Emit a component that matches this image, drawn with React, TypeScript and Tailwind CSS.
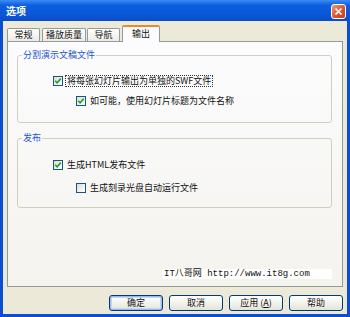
import React from 'react';

const CheckBox = ({ checked }: { checked: boolean }) => (
  <span className="w-[10px] h-[10px] shrink-0 border border-[#1C5180] bg-[linear-gradient(135deg,#DCDCD7,#FFFFFF)] flex items-center justify-center">
    {checked && (
      <svg width="8" height="8" viewBox="0 0 8 8">
        <path d="M1.2 3.8 L3.1 5.8 L6.8 1.6" stroke="#21A121" strokeWidth="1.6" fill="none" />
      </svg>
    )}
  </span>
);

const CheckRow = ({
  checked,
  label,
  indent,
  focused,
}: {
  checked: boolean;
  label: string;
  indent: string;
  focused?: boolean;
}) => (
  <div className={`flex items-center h-[12px] gap-[2px] ${indent}`}>
    <CheckBox checked={checked} />
    <span className={focused ? 'border border-dotted border-[#333] px-[1px] leading-[10px]' : 'px-[2px]'}>{label}</span>
  </div>
);

const Tab = ({ label, width, active }: { label: string; width: string; active?: boolean }) =>
  active ? (
    <div
      className={`${width} h-[17px] -mb-px relative z-10 bg-[#FCFCFE] border-x border-[#919B9C] border-t-2 border-t-[#E68B2C] rounded-t-[2px] flex justify-center pt-[1px] leading-[12px]`}
    >
      {label}
    </div>
  ) : (
    <div
      className={`${width} h-[13px] bg-[linear-gradient(#FFFFFF,#ECEBE6)] border-x border-t border-[#919B9C] rounded-t-[2px] flex items-center justify-center`}
    >
      {label}
    </div>
  );

const Button = ({ children, isDefault }: { children: React.ReactNode; isDefault?: boolean }) => (
  <button
    className={`w-[54px] h-[16px] rounded-[3px] border border-[#003C74] bg-[linear-gradient(#FFFFFF,#F0F0EA_60%,#E3E3DB)] flex items-center justify-center leading-[12px] ${
      isDefault ? 'shadow-[inset_0_0_0_1px_#9DB9EB,inset_0_0_0_2px_#C5D6F6]' : ''
    }`}
  >
    {children}
  </button>
);

export default function App() {
  return (
    <div className="w-[350px] h-[317px] flex flex-col bg-[#0B4FD1] overflow-hidden text-[9px] leading-[12px] text-[#111] font-['Noto_Sans_CJK_SC','Noto_Sans',sans-serif]">
      {/* title bar */}
      <div className="h-[21px] shrink-0 flex items-center pl-[6px] pr-[4px] bg-[linear-gradient(#3D8CF4,#0D5EE0_25%,#0A56D8_70%,#0A4CC6)]">
        <span className="text-white font-bold text-[10px]">选项</span>
        <div className="ml-auto mt-[2px] w-[15px] h-[15px] rounded-[3px] border border-white bg-[linear-gradient(135deg,#EE9A78,#D9562F_55%,#C2411E)] flex items-center justify-center">
          <svg width="9" height="9" viewBox="0 0 9 9">
            <path d="M1.5 1.5 L7.5 7.5 M7.5 1.5 L1.5 7.5" stroke="white" strokeWidth="1.7" />
          </svg>
        </div>
      </div>

      {/* body */}
      <div className="flex-1 mx-[3px] mb-[3px] bg-[#ECE9D8] flex flex-col px-[4px]">
        <div className="h-[20px] flex items-end gap-[1px]">
          <Tab label="常规" width="w-[33px]" />
          <Tab label="播放质量" width="w-[44px] ml-[1px]" />
          <Tab label="导航" width="w-[33px]" />
          <Tab label="输出" width="w-[38px] ml-[1px]" active />
        </div>

        <div className="h-[246px] border border-[#919B9C] bg-[linear-gradient(#FCFCFE,#F4F3EE)] flex flex-col pl-[9px] pr-[10px] pt-[7px] pb-[7px]">
          <fieldset className="border border-[#D0D0BF] rounded-[3px] pt-[14px] pb-[15px] flex flex-col gap-[8px]">
            <legend className="ml-[4px] px-[1px] text-[#1E56D0] leading-[12px]">分割演示文稿文件</legend>
            <CheckRow checked indent="pl-[35px]" label="将每张幻灯片输出为单独的SWF文件" focused />
            <CheckRow checked indent="pl-[58px]" label="如可能，使用幻灯片标题为文件名称" />
          </fieldset>

          <fieldset className="mt-[9px] border border-[#D0D0BF] rounded-[3px] pt-[15px] pb-[13px] flex flex-col gap-[11px]">
            <legend className="ml-[4px] px-[1px] text-[#1E56D0] leading-[12px]">发布</legend>
            <CheckRow checked indent="pl-[35px]" label="生成HTML发布文件" />
            <CheckRow checked={false} indent="pl-[58px]" label="生成刻录光盘自动运行文件" />
          </fieldset>

          <div className="mt-auto self-end w-[170px] h-[10px] bg-white pl-[2px] leading-[10px] text-[9px] font-['Liberation_Mono','Noto_Sans_CJK_SC',monospace] whitespace-pre">
            IT八哥网 http://www.it8g.com
          </div>
        </div>

        <div className="mt-[8px] flex justify-end gap-[6px]">
          <Button isDefault>确定</Button>
          <Button>取消</Button>
          <Button>
            应用 (<span className="underline">A</span>)
          </Button>
          <Button>帮助</Button>
        </div>
      </div>
    </div>
  );
}
